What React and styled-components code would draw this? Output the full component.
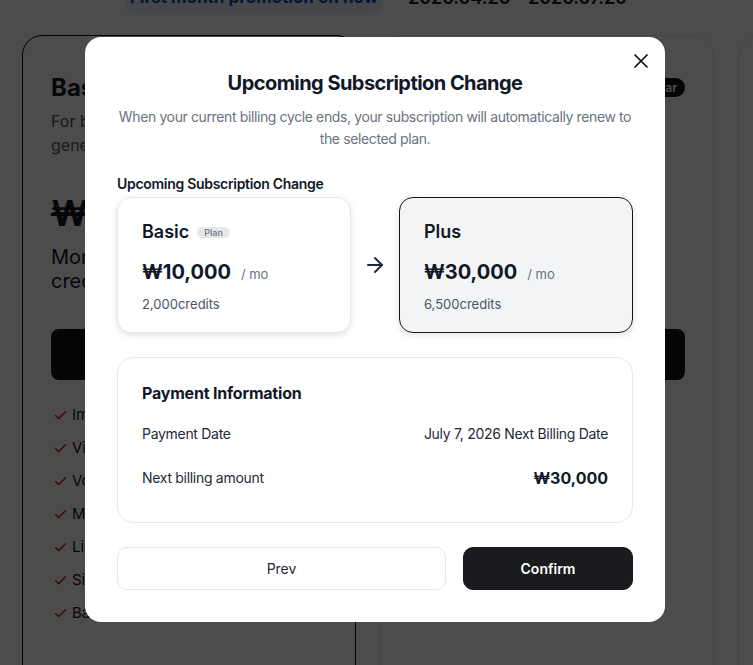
import styled, { createGlobalStyle } from "styled-components";
import { ArrowRight, Check, X } from "lucide-react";

const GlobalStyle = createGlobalStyle`
  html, body {
    margin: 0;
    padding: 0;
    background: #ffffff;
    overflow: hidden;
    font-family: Inter, "Noto Sans", "Liberation Sans", sans-serif;
    color: #111827;
  }
  * { box-sizing: border-box; }
`;

const features = [
  "Image generation",
  "Video generation",
  "Voice synthesis",
  "Music generation",
  "Lip sync",
  "Single workspace",
  "Basic support",
];

const App = () => {
  return (
    <>
      <GlobalStyle />
      <Page>
        <PromoRow>
          <PromoBadge>First month promotion on now</PromoBadge>
          <PromoDate>2026.04.20 - 2026.07.20</PromoDate>
        </PromoRow>
        <CardRow>
          <PriceCard selected>
            <CardHead>
              <CardTitle>Basic</CardTitle>
            </CardHead>
            <CardDesc>
              For basic users trying AI
              <br />
              generation features
            </CardDesc>
            <OldPrice>₩15,000</OldPrice>
            <CreditText>
              Monthly 2,000
              <br />
              credits provided
            </CreditText>
            <DarkButton>Current plan</DarkButton>
            <FeatureList>
              {features.map((f) => (
                <Feature key={f}>
                  <Check size={15} color="#dc2626" strokeWidth={2.5} />
                  {f}
                </Feature>
              ))}
            </FeatureList>
          </PriceCard>
          <PriceCard>
            <CardHead>
              <CardTitle>Plus</CardTitle>
              <Popular>Popular</Popular>
            </CardHead>
            <CardDesc>
              For creators who need more
              <br />
              generation every month
            </CardDesc>
            <OldPrice>₩45,000</OldPrice>
            <CreditText>
              Monthly 6,500
              <br />
              credits provided
            </CreditText>
            <DarkButton>Upgrade</DarkButton>
          </PriceCard>
          <PriceCard />
        </CardRow>
      </Page>

      <Backdrop>
        <Modal>
          <CloseButton aria-label="close">
            <X size={24} strokeWidth={1.75} />
          </CloseButton>
          <ModalTitle>Upcoming Subscription Change</ModalTitle>
          <ModalText>
            When your current billing cycle ends, your subscription will
            automatically renew to the selected plan.
          </ModalText>

          <SectionLabel>Upcoming Subscription Change</SectionLabel>
          <PlanCompare>
            <PlanCard>
              <PlanName>
                Basic <PlanTag>Plan</PlanTag>
              </PlanName>
              <PlanPrice>
                ₩10,000 <Per>/ mo</Per>
              </PlanPrice>
              <Credits>2,000credits</Credits>
            </PlanCard>
            <ArrowCell>
              <ArrowRight size={24} strokeWidth={2} color="#1f2937" />
            </ArrowCell>
            <PlanCard next>
              <PlanName>Plus</PlanName>
              <PlanPrice>
                ₩30,000 <Per>/ mo</Per>
              </PlanPrice>
              <Credits>6,500credits</Credits>
            </PlanCard>
          </PlanCompare>

          <PaymentBox>
            <PaymentTitle>Payment Information</PaymentTitle>
            <InfoRow>
              <span>Payment Date</span>
              <span>July 7, 2026 Next Billing Date</span>
            </InfoRow>
            <InfoRow>
              <span>Next billing amount</span>
              <Amount>₩30,000</Amount>
            </InfoRow>
          </PaymentBox>

          <Actions>
            <Button>Prev</Button>
            <Button primary>Confirm</Button>
          </Actions>
        </Modal>
      </Backdrop>
    </>
  );
};

export default App;

const Page = styled.div`
  margin-top: -21px;
  width: 100%;
`;

const PromoRow = styled.div`
  display: flex;
  align-items: center;
  gap: 25px;
  padding-left: 125px;
  margin-bottom: 20px;
`;

const PromoBadge = styled.div`
  height: 36px;
  width: 258px;
  display: flex;
  align-items: center;
  justify-content: center;
  background: #e6edfb;
  border-radius: 10px;
  color: #1e40af;
  font-size: 17px;
  font-weight: 700;
`;

const PromoDate = styled.div`
  font-size: 18px;
  font-weight: 600;
  color: #111827;
`;

const CardRow = styled.div`
  display: flex;
  gap: 24px;
  padding-left: 22px;
`;

const PriceCard = styled.div`
  flex-shrink: 0;
  width: 334px;
  min-height: 700px;
  border: 1px solid ${(p) => (p.selected ? "#000" : "#e5e7eb")};
  border-radius: 20px;
  padding: 35px 28px;
  display: flex;
  flex-direction: column;
`;

const CardHead = styled.div`
  display: flex;
  align-items: center;
  justify-content: space-between;
  height: 32px;
`;

const CardTitle = styled.div`
  font-size: 24px;
  font-weight: 700;
`;

const Popular = styled.div`
  background: #111;
  color: #fff;
  font-size: 12px;
  font-weight: 600;
  padding: 2px 8px;
  border-radius: 999px;
`;

const CardDesc = styled.div`
  margin-top: 6px;
  font-size: 16px;
  line-height: 24px;
  color: #4b5563;
`;

const OldPrice = styled.div`
  margin-top: 34px;
  font-size: 36px;
  line-height: 44px;
  font-weight: 700;
  text-decoration: line-through;
`;

const CreditText = styled.div`
  margin-top: 10px;
  font-size: 20px;
  line-height: 24px;
  color: #111827;
`;

const DarkButton = styled.div`
  margin-top: 36px;
  height: 51px;
  border-radius: 8px;
  background: #111;
  color: #fff;
  display: flex;
  align-items: center;
  justify-content: center;
  font-size: 16px;
  font-weight: 600;
`;

const FeatureList = styled.div`
  margin-top: 24px;
  display: flex;
  flex-direction: column;
  gap: 11px;
  padding-left: 2px;
`;

const Feature = styled.div`
  display: flex;
  align-items: center;
  gap: 4px;
  font-size: 15px;
  line-height: 22px;
  color: #111827;
`;

const Backdrop = styled.div`
  position: fixed;
  inset: 0;
  background: rgba(0, 0, 0, 0.7);
  display: flex;
  align-items: center;
  justify-content: center;
  padding: 0 3px 6px 0;
`;

const Modal = styled.div`
  position: relative;
  width: 580px;
  background: #fff;
  border-radius: 16px;
  padding: 32px;
  display: flex;
  flex-direction: column;
`;

const CloseButton = styled.button`
  position: absolute;
  top: 12px;
  right: 12px;
  width: 24px;
  height: 24px;
  padding: 0;
  border: none;
  background: none;
  color: #111;
  display: flex;
  cursor: pointer;
`;

const ModalTitle = styled.h2`
  margin: 0;
  text-align: center;
  font-size: 20px;
  line-height: 28px;
  font-weight: 700;
  color: #111827;
  letter-spacing: -0.55px;
`;

const ModalText = styled.p`
  margin: 9px 0 0;
  text-align: center;
  font-size: 14px;
  line-height: 22px;
  color: #6b7280;
  letter-spacing: -0.38px;
`;

const SectionLabel = styled.div`
  margin-top: 24px;
  font-size: 14px;
  line-height: 20px;
  font-weight: 600;
  color: #111827;
  letter-spacing: -0.3px;
`;

const PlanCompare = styled.div`
  margin-top: 3px;
  display: grid;
  grid-template-columns: 1fr 48px 1fr;
  align-items: stretch;
`;

const PlanCard = styled.div`
  border: 1px solid ${(p) => (p.next ? "#18181b" : "#e5e7eb")};
  background: ${(p) => (p.next ? "#f3f4f6" : "#fff")};
  border-radius: 14px;
  padding: 20px 24px 18px;
  box-shadow: 0 2px 6px rgba(0, 0, 0, 0.12);
`;

const PlanName = styled.div`
  display: flex;
  align-items: center;
  gap: 8px;
  font-size: 18px;
  line-height: 28px;
  font-weight: 600;
  color: #111827;
`;

const PlanTag = styled.span`
  background: #e5e7eb;
  color: #6b7280;
  font-size: 9px;
  line-height: 11px;
  font-weight: 500;
  padding: 0 7px;
  border-radius: 999px;
  margin-top: 1px;
`;

const PlanPrice = styled.div`
  margin-top: 12px;
  display: flex;
  align-items: baseline;
  gap: 10px;
  font-size: 20px;
  line-height: 28px;
  font-weight: 700;
  color: #111827;
`;

const Per = styled.span`
  font-size: 13px;
  font-weight: 400;
  color: #6b7280;
`;

const Credits = styled.div`
  margin-top: 6px;
  font-size: 13px;
  line-height: 20px;
  color: #4b5563;
`;

const ArrowCell = styled.div`
  display: flex;
  align-items: center;
  justify-content: center;
`;

const PaymentBox = styled.div`
  margin-top: 24px;
  border: 1px solid #e5e7eb;
  border-radius: 16px;
  padding: 24px 24px 34px;
  display: flex;
  flex-direction: column;
  gap: 24px;
`;

const PaymentTitle = styled.div`
  font-size: 16px;
  line-height: 22px;
  font-weight: 700;
  color: #111827;
  margin-bottom: -4px;
  letter-spacing: -0.2px;
`;

const InfoRow = styled.div`
  display: flex;
  justify-content: space-between;
  align-items: center;
  font-size: 14px;
  line-height: 20px;
  color: #1f2937;
  letter-spacing: -0.3px;
`;

const Amount = styled.span`
  font-size: 16px;
  font-weight: 700;
  color: #111827;
  letter-spacing: 0;
`;

const Actions = styled.div`
  margin-top: 24px;
  display: grid;
  grid-template-columns: 1fr 170px;
  gap: 17px;
`;

const Button = styled.button`
  height: 43px;
  border-radius: 10px;
  border: 1px solid ${(p) => (p.primary ? "#1a1b1e" : "#e5e7eb")};
  background: ${(p) => (p.primary ? "#1a1b1e" : "#fff")};
  color: ${(p) => (p.primary ? "#fff" : "#1f2937")};
  font-family: inherit;
  font-size: 14px;
  font-weight: ${(p) => (p.primary ? 600 : 400)};
  cursor: pointer;
`;
